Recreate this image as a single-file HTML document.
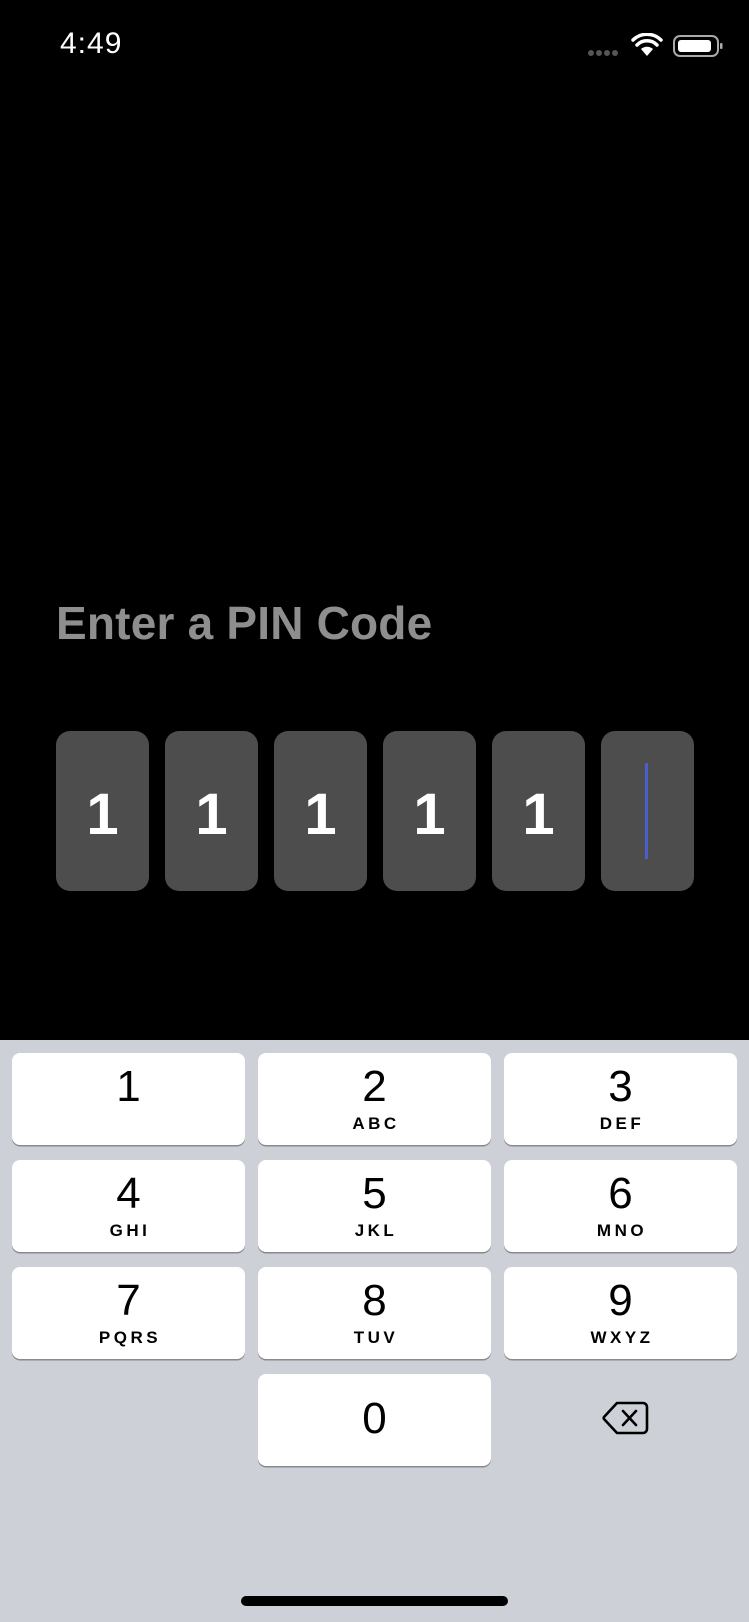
<!DOCTYPE html>
<html><head><meta charset="utf-8"><style>
*{margin:0;padding:0;box-sizing:border-box}
body{width:749px;height:1622px;background:#000;position:relative;overflow:hidden;font-family:"Liberation Sans",sans-serif}
.abs{position:absolute}
.time{left:60px;top:27px;font-size:30px;color:#fff;letter-spacing:1px}
.title{left:56px;top:596px;font-size:46px;font-weight:bold;color:#8e8e8e;letter-spacing:0.2px}
.box{top:731px;width:93px;height:160px;background:#4d4d4d;border-radius:14px;color:#fff;font-weight:bold;font-size:58px;display:flex;align-items:center;justify-content:center;padding-top:6px}
.kb{left:0;top:1040px;width:749px;height:582px;background:#cdd0d6}
.key{width:233px;height:92px;background:#fff;border-radius:8px;box-shadow:0 1.5px 0 #898a8d;text-align:center;color:#000}
.d{font-size:44px;line-height:44px;margin-top:12px;display:block}
.l{font-size:17px;font-weight:bold;letter-spacing:3.5px;display:block;margin-top:5px;padding-left:3px}
</style></head><body>
<div class="abs time">4:49</div>
<svg class="abs" style="left:586px;top:33px" width="140" height="28" viewBox="0 0 140 28">
<g fill="#555"><circle cx="5" cy="20" r="3"/><circle cx="13" cy="20" r="3"/><circle cx="21" cy="20" r="3"/><circle cx="29" cy="20" r="3"/></g>
<path d="M61 23 L55 16 A9 9 0 0 1 67 16 Z" fill="#fff"/>
<path d="M51 12 A14 14 0 0 1 71 12" stroke="#fff" stroke-width="3.5" fill="none" stroke-linecap="round"/>
<path d="M47 7 A20 20 0 0 1 75 7" stroke="#fff" stroke-width="3.5" fill="none" stroke-linecap="round"/>
<rect x="88" y="3" width="44" height="20" rx="6" stroke="#aaa" stroke-width="2" fill="none"/>
<rect x="92" y="7" width="33" height="12" rx="3" fill="#fff"/>
<rect x="134" y="10" width="2.5" height="6" rx="1" fill="#aaa"/>
</svg>
<div class="abs title">Enter a PIN Code</div>
<div class="abs box" style="left:56px">1</div>
<div class="abs box" style="left:165px">1</div>
<div class="abs box" style="left:274px">1</div>
<div class="abs box" style="left:383px">1</div>
<div class="abs box" style="left:492px">1</div>
<div class="abs box" style="left:601px"></div>
<div class="abs" style="left:645px;top:763px;width:3px;height:96px;background:#4a5fc8"></div>
<div class="abs kb"></div>
<div class="abs key" style="left:12px;top:1053px"><span class="d">1</span></div>
<div class="abs key" style="left:258px;top:1053px"><span class="d">2</span><span class="l">ABC</span></div>
<div class="abs key" style="left:504px;top:1053px"><span class="d">3</span><span class="l">DEF</span></div>
<div class="abs key" style="left:12px;top:1160px"><span class="d">4</span><span class="l">GHI</span></div>
<div class="abs key" style="left:258px;top:1160px"><span class="d">5</span><span class="l">JKL</span></div>
<div class="abs key" style="left:504px;top:1160px"><span class="d">6</span><span class="l">MNO</span></div>
<div class="abs key" style="left:12px;top:1267px"><span class="d">7</span><span class="l">PQRS</span></div>
<div class="abs key" style="left:258px;top:1267px"><span class="d">8</span><span class="l">TUV</span></div>
<div class="abs key" style="left:504px;top:1267px"><span class="d">9</span><span class="l">WXYZ</span></div>
<div class="abs key" style="left:258px;top:1374px"><span class="d" style="margin-top:23px">0</span></div>
<svg class="abs" style="left:601px;top:1400px" width="48" height="36" viewBox="0 0 48 36">
<path d="M16 3 H42 A4 4 0 0 1 46 7 V29 A4 4 0 0 1 42 33 H16 L3 19 A2 2 0 0 1 3 17 Z" stroke="#000" stroke-width="2.6" fill="none" stroke-linejoin="round"/>
<path d="M22 11 L35 25 M35 11 L22 25" stroke="#000" stroke-width="2.6" stroke-linecap="round"/>
</svg>
<div class="abs" style="left:241px;top:1596px;width:267px;height:10px;background:#000;border-radius:5px"></div>
</body></html>
